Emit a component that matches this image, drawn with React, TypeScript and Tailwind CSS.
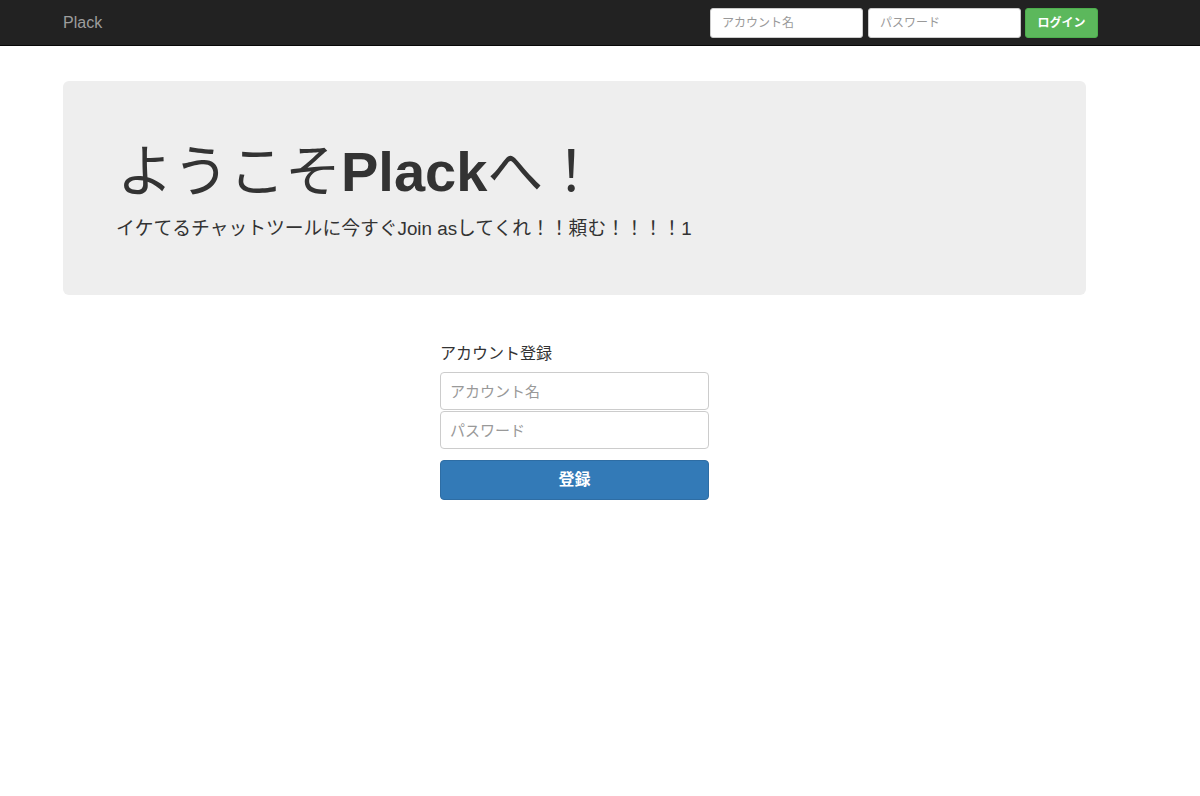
import React from "react";

const font = { fontFamily: '"Liberation Sans", "Noto Sans CJK JP", sans-serif' };

export default function App() {
  return (
    <div className="min-h-[796px] bg-white text-[#333]" style={font}>
      <nav className="h-[46px] bg-[#222] border-b border-[#080808]">
        <div className="w-[1035px] ml-[63px] h-full flex items-center justify-between">
          <span className="text-[16px] text-[#9d9d9d]">Plack</span>
          <div className="flex items-center gap-[5px]">
            <input
              className="w-[153px] h-[30px] rounded-[3px] border border-[#ccc] bg-white px-[11px] text-[12px] placeholder:text-[#999] outline-none"
              placeholder="アカウント名"
            />
            <input
              className="w-[153px] h-[30px] rounded-[3px] border border-[#ccc] bg-white px-[11px] text-[12px] placeholder:text-[#999] outline-none"
              placeholder="パスワード"
            />
            <button className="w-[73px] h-[30px] rounded-[3px] bg-[#5cb85c] border border-[#4cae4c] text-white text-[12px] font-bold ml-[-1px]">
              ログイン
            </button>
          </div>
        </div>
      </nav>
      <div className="w-[1023px] ml-[63px]">
        <div className="mt-[35px] h-[214px] rounded-[6px] bg-[#eee] pl-[54px] pt-[60px]">
          <h1 className="text-[56px] leading-[62px] text-[#333] font-normal">
            ようこそ<span className="font-bold">Plack</span>へ！
          </h1>
          <p className="text-[18.8px] leading-[28px] mt-[12px] ml-[-1px]">
            イケてるチャットツールに今すぐJoin asしてくれ！！頼む！！！！1
          </p>
        </div>
        <div className="w-[269px] mx-auto mt-[48px]">
          <div className="text-[16px] leading-[22px] text-[#333]">アカウント登録</div>
          <div className="mt-[7px] flex flex-col gap-[1px]">
            <input
              className="h-[38px] rounded-[4px] border border-[#ccc] px-[9px] text-[15px] placeholder:text-[#999] outline-none"
              placeholder="アカウント名"
            />
            <input
              className="h-[38px] rounded-[4px] border border-[#ccc] px-[9px] text-[15px] placeholder:text-[#999] outline-none"
              placeholder="パスワード"
            />
          </div>
          <button className="mt-[11px] w-full h-[40px] rounded-[4px] bg-[#337ab7] border border-[#2e6da4] text-white text-[16px] font-bold">
            登録
          </button>
        </div>
      </div>
    </div>
  );
}
